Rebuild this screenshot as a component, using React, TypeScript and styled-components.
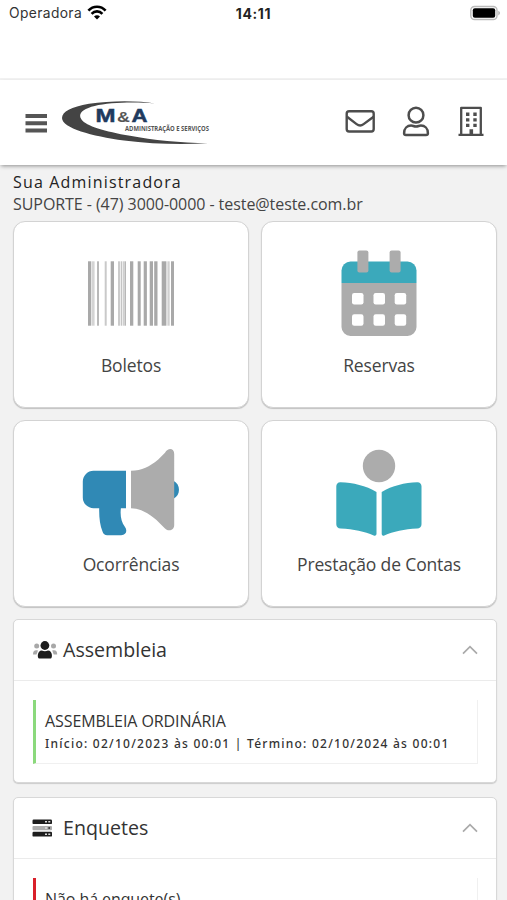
import React from "react";
import styled, { createGlobalStyle } from "styled-components";

const Global = createGlobalStyle`
  * { box-sizing: border-box; }
  html, body { margin: 0; height: 900px; overflow: hidden; background: #f2f2f2; }
  body { font-family: "Open Sans", "Noto Sans", sans-serif; color: #444; }
  svg { display: block; flex: none; overflow: visible; }
`;

const Screen = styled.div`
  width: 507px;
  height: 900px;
  overflow: hidden;
  background: #f2f2f2;
`;

const StatusBar = styled.div`
  display: grid;
  grid-template-columns: 1fr auto 1fr;
  align-items: start;
  height: 80px;
  padding: 5px 6px 0 9px;
  background: #fff;
  border-bottom: 2px solid #f2f2f2;
  font-family: Inter, Roboto, sans-serif;
  line-height: 17px;
`;

const Carrier = styled.div`
  display: flex;
  gap: 5px;
  font-size: 13.8px;
  letter-spacing: 0.38px;
  color: #333;
`;

const Clock = styled.div`
  margin-left: -3px;
  font-size: 14px;
  font-weight: 700;
  color: #222;
  letter-spacing: 0.6px;
`;

const Battery = styled.div`
  justify-self: end;
`;

const Header = styled.header`
  display: flex;
  align-items: center;
  height: 85px;
  padding: 0 23px 0 25px;
  background: #fff;
  box-shadow: 0 2px 4px -1px rgba(0, 0, 0, 0.42);
`;

const LogoSlot = styled.div`
  margin: -2px 0 0 15px;
`;

const Actions = styled.nav`
  display: flex;
  gap: 27.5px;
  margin: -3px 0 0 auto;
`;

const Contact = styled.section`
  height: 56px;
  padding: 6px 13px 0;
`;

const ContactTitle = styled.div`
  font-size: 16px;
  line-height: 22px;
  font-weight: 500;
  letter-spacing: 1.17px;
  color: #222;
`;

const ContactLine = styled.div`
  font-size: 16px;
  line-height: 22px;
  letter-spacing: -0.06px;
  color: #444;
`;

const Tiles = styled.main`
  display: grid;
  grid-template-columns: 1fr 1fr;
  grid-auto-rows: 187px;
  gap: 12px;
  padding: 0 10px 0 13px;
`;

const Tile = styled.button`
  display: flex;
  flex-direction: column;
  align-items: center;
  padding: 23px 0 0;
  font: inherit;
  color: inherit;
  background: #fff;
  border: 1px solid #d3d3d3;
  border-radius: 12px;
  box-shadow: 0 1px 1px rgba(0, 0, 0, 0.2);
`;

const TileLabel = styled.span`
  margin-top: 8px;
  font-size: 17.5px;
  line-height: 24px;
  letter-spacing: -0.14px;
`;

const Panel = styled.section`
  height: 164px;
  margin: 12px 10px 0 13px;
  background: #fff;
  border: 1px solid #d8d8d8;
  border-radius: 5px;
  box-shadow: 0 1px 1px rgba(0, 0, 0, 0.16);
  & + & { margin-top: 14px; }
`;

const PanelHeader = styled.div`
  display: flex;
  align-items: center;
  height: 61px;
  padding: 0 18px 1px;
  border-bottom: 1px solid #ebebeb;
  color: #333;
`;

const PanelTitle = styled.h2`
  flex: 1;
  margin: 0 0 0 5px;
  font-size: 19.6px;
  font-weight: 400;
  line-height: 28px;
`;

const Notice = styled.div<{ $accent: string }>`
  height: 64px;
  margin: 19px 18px 0 19px;
  padding: 9px 9px 0;
  border: solid #f0f0f0;
  border-width: 0 1px 1px 3px;
  border-left-color: ${(p) => p.$accent};
  color: #333;
`;

const NoticeTitle = styled.div`
  font-size: 16px;
  line-height: 24px;
  letter-spacing: -0.08px;
`;

const NoticeDate = styled.div`
  font-family: "Noto Sans", sans-serif;
  font-size: 12px;
  line-height: 22px;
  font-weight: 500;
  letter-spacing: 1.25px;
  white-space: nowrap;
`;

const WifiIcon = () => (
  <svg width="20" height="16" viewBox="0 0 20 16" fill="none" stroke="#000" strokeWidth="2.6">
    <path d="M1.4 5.6C6.1.4 13.9.4 18.6 5.6M4.6 8.8c3-3.2 7.8-3.2 10.8 0" />
    <path d="M7 11.5c1.7-1.6 4.3-1.6 6 0L10 14.5z" fill="#000" stroke="none" />
  </svg>
);

const BatteryIcon = () => (
  <svg width="31" height="16" viewBox="0 0 31 16">
    <rect x=".8" y="1.5" width="26.2" height="13" rx="3.8" fill="#fff" stroke="#bbb" strokeWidth="1.4" />
    <rect x="2.8" y="3.3" width="22.4" height="9.4" rx="2" fill="#000" />
    <path d="M28.4 5.8c2 1 2 3.6 0 4.6z" fill="#aaa" />
  </svg>
);

const MenuIcon = () => (
  <svg width="22" height="20" viewBox="0 0 22 20" fill="#555">
    <path d="M.5 1H22v4H.5zM.5 8.3H22v4H.5zM.5 15.6H22v4H.5z" />
  </svg>
);

const Logo = () => (
  <svg width="150" height="46" viewBox="0 0 150 46">
    <path
      d="M93 4.6C76 1.2 48 1.4 27 4.8 9 7.8 0 13 0 19 0 29 30 37.2 62 41.5c28 3.7 58 4 84 2.8-28-.4-55-3.2-78-7.5C43 32.5 24 27 19.500 20.500 13 11 31 4.700 60 3.800 73 3.300 84 3.900 93 4.600z"
      fill="#444"
    />
    <g fontFamily="Liberation Sans, sans-serif" fontWeight="700" fontSize="18.800">
      <text x="33.500" y="22.800" fill="#203a5e" stroke="#203a5e" strokeWidth=".5" textLength="20" lengthAdjust="spacingAndGlyphs">M</text>
      <text x="55" y="22.800" fontSize="15.500" fill="#555" textLength="13" lengthAdjust="spacingAndGlyphs">&amp;</text>
      <text x="69.500" y="22.800" fill="#203a5e" stroke="#203a5e" strokeWidth=".5" textLength="16" lengthAdjust="spacingAndGlyphs">A</text>
    </g>
    <text x="63" y="31.800" fontFamily="Open Sans, sans-serif" fontWeight="700" fontSize="6.800" fill="#555" textLength="84" lengthAdjust="spacingAndGlyphs">ADMINISTRAÇÃO E SERVIÇOS</text>
  </svg>
);

const MailIcon = () => (
  <svg width="30" height="32" viewBox="0 0 30 32" fill="none" stroke="#4d4d4d" strokeWidth="2.4">
    <rect x="1.7" y="6.3" width="27" height="20.2" rx="2.4" />
    <path d="M2 11.8l9.6 7.3c2.2 1.7 4.8 1.7 7 0l10-7.3" />
  </svg>
);

const UserIcon = () => (
  <svg width="27" height="32" viewBox="0 0 27 32" fill="none" stroke="#4d4d4d" strokeWidth="2.5">
    <circle cx="13" cy="10.2" r="7.4" />
    <path d="M3 30c-1.2 0-1.9-.7-1.9-1.8 0-4.8 3.2-7.6 7-7.6 1.8 0 2.8.9 4.9.9s3.1-.9 4.9-.9c3.8 0 7 2.800 7 7.600 0 1.100-.7 1.800-1.900 1.800z" />
  </svg>
);

const BuildingIcon = () => (
  <svg width="27" height="32" viewBox="0 0 27 32" fill="#4d4d4d">
    <path d="M4.2 30V2.8h19.6V30" fill="none" stroke="#4d4d4d" strokeWidth="2.3" strokeLinejoin="round" />
    <path d="M1.5 28.7h25V31h-25zM9 7.6h3.4V11H9zM16.3 7.6h3.4V11h-3.4zM9 13.2h3.4v3.4H9zM16.3 13.2h3.4v3.4h-3.4zM9 18.7h3.4v3.4H9zM16.3 18.7h3.4v3.4h-3.4zM12.5 24.2h3.6V29h-3.6z" />
  </svg>
);

const bars: [number, number, string][] = [
  [18, 3.3, "#a9a9a9"], [22, 2.6, "#d4d4d4"], [27, 2, "#b9b9b9"], [34.7, 2, "#c9c9c9"],
  [40.7, 3.3, "#a9a9a9"], [48, 2, "#cbcbcb"], [50.7, 1.5, "#c4c4c4"], [52.8, 1.4, "#d0d0d0"],
  [54.5, 1.4, "#b0b0b0"], [60, 3.3, "#a9a9a9"], [67.7, 3, "#a9a9a9"], [73.7, 3.2, "#a9a9a9"],
  [79.7, 3.3, "#a9a9a9"], [84.2, 3.3, "#a9a9a9"], [91.7, 4.7, "#a9a9a9"], [97.4, 2.3, "#d0d0d0"],
  [101, 3, "#a9a9a9"],
];

const BarcodeIcon = () => (
  <svg width="122" height="100" viewBox="0 0 122 100">
    {bars.map(([x, width, fill]) => (
      <rect key={x} x={x} y="16.3" width={width} height="64.4" fill={fill} />
    ))}
  </svg>
);

const CalendarIcon = () => (
  <svg width="122" height="100" viewBox="0 0 122 100">
    <path d="M23.5 38h75v44a9 9 0 0 1-9 9h-57a9 9 0 0 1-9-9z" fill="#acacac" />
    <path d="M23.5 38v-12.5a9 9 0 0 1 9-9h57a9 9 0 0 1 9 9V38z" fill="#3ba9bb" />
    <rect x="39.4" y="5.5" width="11" height="22" rx="2" fill="#acacac" />
    <rect x="71.6" y="5.5" width="11" height="22" rx="2" fill="#acacac" />
    {[48, 69.3].map((y) =>
      [34, 55.5, 76.7].map((x) => (
        <rect key={`${x}-${y}`} x={x} y={y} width="11.5" height="11.5" rx="2.2" fill="#fff" />
      ))
    )}
  </svg>
);

const MegaphoneIcon = () => (
  <svg width="122" height="100" viewBox="0 0 122 100">
    <path d="M56 26.8H23.5a10.7 10.7 0 0 0-10.7 10.7v16a10.7 10.7 0 0 0 10.7 10.7h5.7c-.2 9 .8 17 3.3 23.3.9 2.6 2.2 3.7 4.7 3.7h14c5 0 6.4-4.5 3.8-8.1-4.1-5.6-4.9-11.7-4.1-18.9H56z" fill="#3089b5" />
    <path d="M103.5 36.8c7.3 3.7 7.3 14.4 0 18z" fill="#3089b5" />
    <path d="M61 26.8c11 0 18.500-4.300 27-11l7-7c3.200-5.600 9.200-4.500 9.200 1.200v71c0 5.700-6 6.700-9.200 3.400l-8.500-8.500C78 69 71 64.500 61 64.200z" fill="#acacac" />
  </svg>
);

const ReaderIcon = () => (
  <svg width="122" height="100" viewBox="0 0 122 100">
    <circle cx="61" cy="22" r="16.2" fill="#acacac" />
    <path d="M58.5 48C48 41.5 35 38.7 22.5 38.2c-2.6-.1-4.2 1.7-4.2 4v38c0 2.6 1.7 4.2 4.3 4.4 13.2.8 24 2.9 33.1 6.8 1.7.7 2.8-.1 2.8-1.6zM63.7 48c10.5-6.5 23-9.3 35.5-9.8 2.7-.1 4.3 1.7 4.3 4v38c0 2.6-1.7 4.2-4.3 4.4-13 .8-23.8 2.9-32.9 6.8-1.6.7-2.6-.1-2.6-1.6z" fill="#3ba9bb" />
  </svg>
);

const PeopleIcon = () => (
  <svg width="26" height="20" viewBox="0 0 26 20">
    <g fill="#a8a8a8">
      <circle cx="4.7" cy="6" r="2.5" />
      <circle cx="21.5" cy="6" r="2.5" />
      <path d="M1 14.5c-.2-4 2.2-5 5-4L4.5 14.5zM25.2 14.5c.2-4-2.2-5-5-4l1.5 4z" />
    </g>
    <circle cx="12.9" cy="5.5" r="4.4" fill="#1d1d1d" />
    <path d="M7.2 18.5c-2.2 0-2-8 2.6-8 2 .9 4.2.9 6.2 0 4.6 0 4.8 8 2.6 8z" fill="#1d1d1d" />
  </svg>
);

const ServerIcon = () => (
  <svg width="26" height="20" viewBox="0 0 26 20">
    <rect x=".5" y="1.5" width="19.5" height="4.6" rx="1.2" fill="#1d1d1d" />
    <rect x=".5" y="8" width="19.5" height="4.2" rx="1" fill="#acacac" />
    <rect x=".5" y="13.8" width="19.5" height="4.8" rx="1.2" fill="#1d1d1d" />
    <path d="M13 3h2v1.5h-2zM16.3 3h2v1.5h-2zM13 15.5h2V17h-2zM16.3 15.5h2V17h-2zM13 9.2h2v1.5h-2z" fill="#ddd" />
    <circle cx="17.2" cy="10" r="1" fill="#333" />
  </svg>
);

const ChevronUp = () => (
  <svg width="16" height="10" viewBox="0 0 16 10" fill="none" stroke="#aaa" strokeWidth="1.7">
    <path d="M1 8.7l7-7 7 7" />
  </svg>
);

const tiles = [
  { label: "Boletos", Icon: BarcodeIcon },
  { label: "Reservas", Icon: CalendarIcon },
  { label: "Ocorrências", Icon: MegaphoneIcon },
  { label: "Prestação de Contas", Icon: ReaderIcon },
];

export default function App() {
  return (
    <Screen>
      <Global />
      <StatusBar>
        <Carrier>Operadora <WifiIcon /></Carrier>
        <Clock>14:11</Clock>
        <Battery><BatteryIcon /></Battery>
      </StatusBar>
      <Header>
        <MenuIcon />
        <LogoSlot><Logo /></LogoSlot>
        <Actions>
          <MailIcon />
          <UserIcon />
          <BuildingIcon />
        </Actions>
      </Header>
      <Contact>
        <ContactTitle>Sua Administradora</ContactTitle>
        <ContactLine>SUPORTE - (47) 3000-0000 - teste@teste.com.br</ContactLine>
      </Contact>
      <Tiles>
        {tiles.map(({ label, Icon }) => (
          <Tile key={label}>
            <Icon />
            <TileLabel>{label}</TileLabel>
          </Tile>
        ))}
      </Tiles>
      <Panel>
        <PanelHeader>
          <PeopleIcon />
          <PanelTitle>Assembleia</PanelTitle>
          <ChevronUp />
        </PanelHeader>
        <Notice $accent="#8bd97c">
          <NoticeTitle>ASSEMBLEIA ORDINÁRIA</NoticeTitle>
          <NoticeDate>Início: 02/10/2023 às 00:01 | Término: 02/10/2024 às 00:01</NoticeDate>
        </Notice>
      </Panel>
      <Panel>
        <PanelHeader>
          <ServerIcon />
          <PanelTitle>Enquetes</PanelTitle>
          <ChevronUp />
        </PanelHeader>
        <Notice $accent="#d9202a">
          <NoticeTitle>Não há enquete(s)</NoticeTitle>
        </Notice>
      </Panel>
    </Screen>
  );
}
